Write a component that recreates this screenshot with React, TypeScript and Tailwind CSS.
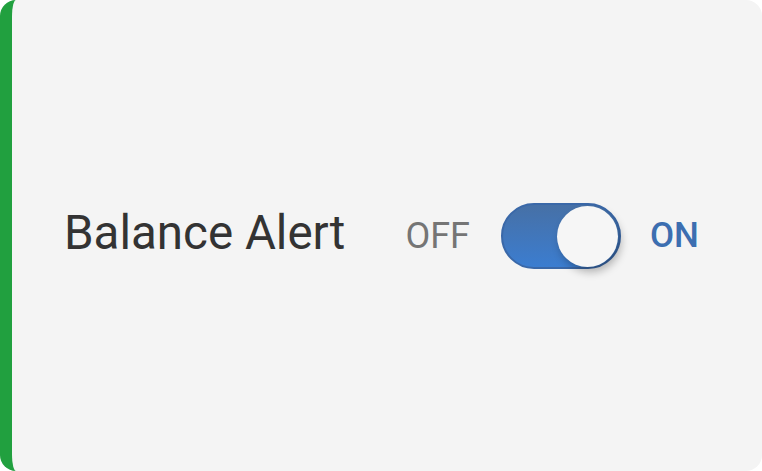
export default function App() {
  return (
    <div className="h-[471px] w-[762px] bg-white" style={{ fontFamily: 'Roboto, "Noto Sans", sans-serif' }}>
      <div className="flex h-full w-full items-center rounded-[16px] border-l-[12px] border-[#21a03f] bg-[#f4f4f4] pl-[52px]">
        <span className="mb-[3px] text-[47.5px] leading-none text-[#333333]">Balance Alert</span>
        <span className="ml-[60px] text-[36px] leading-none text-[#757575]">OFF</span>
        <button
          type="button"
          aria-pressed="true"
          className="relative ml-[31px] h-[66px] w-[120px] rounded-full border-2 border-[#3a68a8] bg-gradient-to-b from-[#4670a6] to-[#3b7dd0]"
        >
          <span className="absolute right-[1px] top-[1px] h-[61px] w-[61px] rounded-full bg-[#f6f6f6] shadow-[3px_5px_8px_rgba(0,0,0,0.28)]" />
        </button>
        <span className="ml-[29px] text-[35px] font-medium leading-none text-[#3c6eb0]">ON</span>
      </div>
    </div>
  );
}
